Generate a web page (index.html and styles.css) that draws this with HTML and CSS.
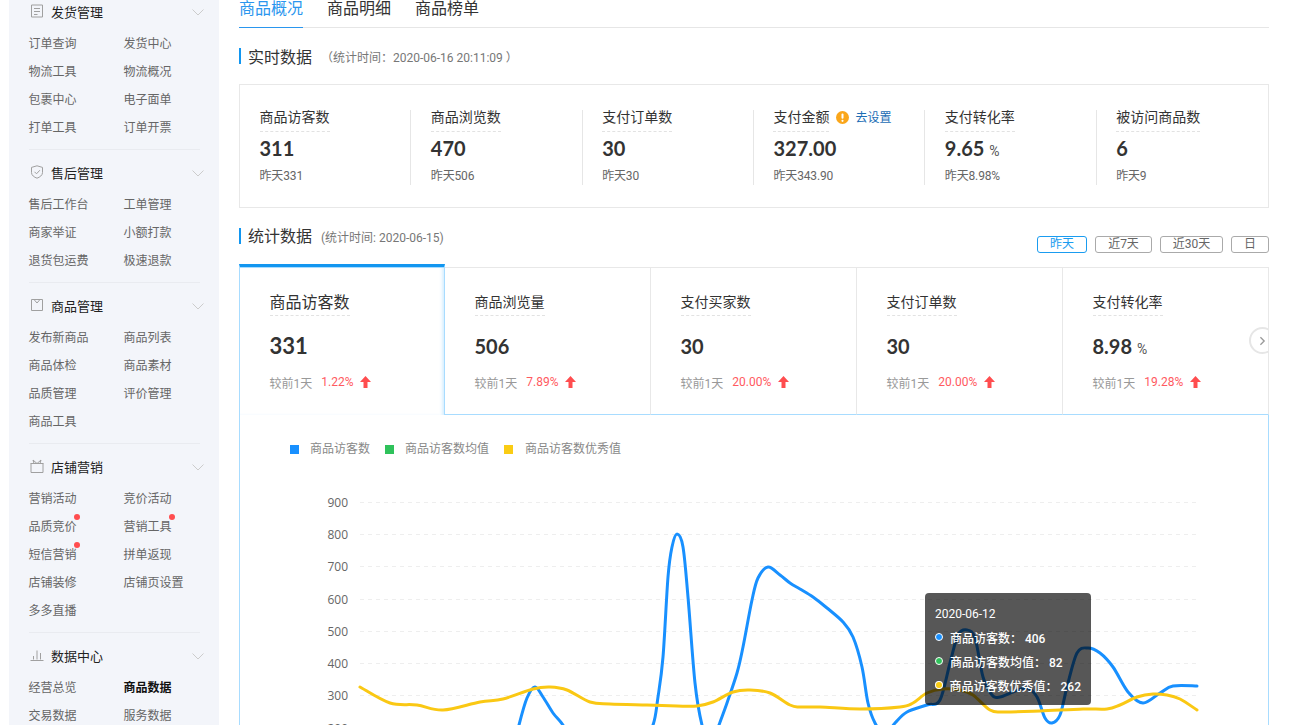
FILE: index.html
```html
<!DOCTYPE html>
<html lang="zh-CN">
<head>
<meta charset="utf-8">
<title>商品数据</title>
<link rel="stylesheet" href="styles.css">
</head>
<body>
<div class="app">
  <aside class="sidebar">
    <section class="nav-group">
      <h3 class="nav-head">
        <svg class="nav-icon" viewBox="0 0 14 14"><path d="M1.500 1h11v12h-11zM4 4.500h6M4 7.500h6M4 10.500h3.500"/></svg>
        <span class="nav-title">发货管理</span>
        <svg class="nav-caret" viewBox="0 0 12 7"><path d="M.5.5 6 6l5.500-5.500"/></svg>
      </h3>
      <ul class="nav-links">
        <li>订单查询</li><li>发货中心</li><li>物流工具</li><li>物流概况</li><li>包裹中心</li><li>电子面单</li><li>打单工具</li><li>订单开票</li>
      </ul>
    </section>
    <section class="nav-group">
      <h3 class="nav-head">
        <svg class="nav-icon" viewBox="0 0 14 14"><path d="M7 .8 1.500 2.400v5.200c0 2.600 2.600 4.600 5.500 5.600 2.900-1 5.500-3 5.500-5.600V2.400zM4.500 6.800 6.500 8.800l3.400-3.600"/></svg>
        <span class="nav-title">售后管理</span>
        <svg class="nav-caret" viewBox="0 0 12 7"><path d="M.5.5 6 6l5.500-5.500"/></svg>
      </h3>
      <ul class="nav-links">
        <li>售后工作台</li><li>工单管理</li><li>商家举证</li><li>小额打款</li><li>退货包运费</li><li>极速退款</li>
      </ul>
    </section>
    <section class="nav-group">
      <h3 class="nav-head">
        <svg class="nav-icon" viewBox="0 0 14 14"><path d="M1.500 1.500h11v11h-11zM4 1.500 7 5l3-3.500"/></svg>
        <span class="nav-title">商品管理</span>
        <svg class="nav-caret" viewBox="0 0 12 7"><path d="M.5.5 6 6l5.500-5.500"/></svg>
      </h3>
      <ul class="nav-links">
        <li>发布新商品</li><li>商品列表</li><li>商品体检</li><li>商品素材</li><li>品质管理</li><li>评价管理</li><li>商品工具</li>
      </ul>
    </section>
    <section class="nav-group">
      <h3 class="nav-head">
        <svg class="nav-icon" viewBox="0 0 14 14"><path d="M.5 4.500h13M1 4.500v9h12v-9M4 4.500 3 1l4 3.500L11 1l-1 3.500"/></svg>
        <span class="nav-title">店铺营销</span>
        <svg class="nav-caret" viewBox="0 0 12 7"><path d="M.5.5 6 6l5.500-5.500"/></svg>
      </h3>
      <ul class="nav-links">
        <li>营销活动</li><li>竞价活动</li><li class="has-dot">品质竞价</li><li class="has-dot">营销工具</li><li class="has-dot">短信营销</li><li>拼单返现</li><li>店铺装修</li><li>店铺页设置</li><li>多多直播</li>
      </ul>
    </section>
    <section class="nav-group">
      <h3 class="nav-head">
        <svg class="nav-icon" viewBox="0 0 14 14"><path d="M.5 12.500h13M3.500 11.500V8M7 11.500V2.500M10.500 11.500V5"/></svg>
        <span class="nav-title">数据中心</span>
        <svg class="nav-caret" viewBox="0 0 12 7"><path d="M.5.5 6 6l5.500-5.500"/></svg>
      </h3>
      <ul class="nav-links">
        <li>经营总览</li><li class="current">商品数据</li><li>交易数据</li><li>服务数据</li>
      </ul>
    </section>
  </aside>

  <main class="main">
    <nav class="tabs">
      <span class="tab tab-active">商品概况</span>
      <span class="tab">商品明细</span>
      <span class="tab">商品榜单</span>
    </nav>

    <div class="section-head realtime-head">
      <h2 class="section-title">实时数据</h2>
      <span class="section-note">（统计时间：2020-06-16 20:11:09 ）</span>
    </div>

    <div class="live-card">
      <div class="live-cell">
        <div class="label-line"><span class="dash-label">商品访客数</span></div>
        <div class="live-value">311</div>
        <div class="live-prev">昨天331</div>
      </div>
      <div class="live-cell">
        <div class="label-line"><span class="dash-label">商品浏览数</span></div>
        <div class="live-value">470</div>
        <div class="live-prev">昨天506</div>
      </div>
      <div class="live-cell">
        <div class="label-line"><span class="dash-label">支付订单数</span></div>
        <div class="live-value">30</div>
        <div class="live-prev">昨天30</div>
      </div>
      <div class="live-cell">
        <div class="label-line">
          <span class="dash-label">支付金额</span>
          <svg class="warn" viewBox="0 0 13 13"><circle cx="6.500" cy="6.500" r="6.500"/><rect class="warn-mark" x="5.500" y="2.500" width="2" height="5.200" rx="1"/><circle class="warn-mark" cx="6.500" cy="9.800" r="1.100"/></svg>
          <a class="set-link">去设置</a>
        </div>
        <div class="live-value">327.00</div>
        <div class="live-prev">昨天343.90</div>
      </div>
      <div class="live-cell">
        <div class="label-line"><span class="dash-label">支付转化率</span></div>
        <div class="live-value">9.65 <small class="unit">%</small></div>
        <div class="live-prev">昨天8.98%</div>
      </div>
      <div class="live-cell">
        <div class="label-line"><span class="dash-label">被访问商品数</span></div>
        <div class="live-value">6</div>
        <div class="live-prev">昨天9</div>
      </div>
    </div>

    <div class="stats-head">
      <div class="section-head">
        <h2 class="section-title stats-title">统计数据</h2>
        <span class="section-note stats-note">(统计时间: 2020-06-15)</span>
      </div>
      <div class="ranges">
        <button class="range range-on">昨天</button>
        <button class="range range-7">近7天</button>
        <button class="range range-30">近30天</button>
        <button class="range range-d">日</button>
      </div>
    </div>

    <div class="metrics">
      <div class="metric metric-on">
        <div class="metric-label"><span class="dash-label">商品访客数</span></div>
        <div class="metric-value">331</div>
        <div class="metric-cmp">较前1天<span class="up">1.22%</span><svg class="arrow" viewBox="0 0 11 12"><path d="M5.500 0 11 6H7.500v6h-4V6H0z"/></svg></div>
      </div>
      <div class="metric">
        <div class="metric-label"><span class="dash-label">商品浏览量</span></div>
        <div class="metric-value">506</div>
        <div class="metric-cmp">较前1天<span class="up">7.89%</span><svg class="arrow" viewBox="0 0 11 12"><path d="M5.500 0 11 6H7.500v6h-4V6H0z"/></svg></div>
      </div>
      <div class="metric">
        <div class="metric-label"><span class="dash-label">支付买家数</span></div>
        <div class="metric-value">30</div>
        <div class="metric-cmp">较前1天<span class="up">20.00%</span><svg class="arrow" viewBox="0 0 11 12"><path d="M5.500 0 11 6H7.500v6h-4V6H0z"/></svg></div>
      </div>
      <div class="metric">
        <div class="metric-label"><span class="dash-label">支付订单数</span></div>
        <div class="metric-value">30</div>
        <div class="metric-cmp">较前1天<span class="up">20.00%</span><svg class="arrow" viewBox="0 0 11 12"><path d="M5.500 0 11 6H7.500v6h-4V6H0z"/></svg></div>
      </div>
      <div class="metric metric-last">
        <div class="metric-label"><span class="dash-label">支付转化率</span></div>
        <div class="metric-value">8.98 <small class="unit">%</small></div>
        <div class="metric-cmp">较前1天<span class="up">19.28%</span><svg class="arrow" viewBox="0 0 11 12"><path d="M5.500 0 11 6H7.500v6h-4V6H0z"/></svg></div>
        <span class="next"><svg viewBox="0 0 8 12"><path d="M1.500 1.500 6 6l-4.500 4.500"/></svg></span>
      </div>
    </div>

    <div class="chart-box">
      <div class="legend">
        <span class="legend-item"><i class="swatch swatch-blue"></i>商品访客数</span>
        <span class="legend-item"><i class="swatch swatch-green"></i>商品访客数均值</span>
        <span class="legend-item"><i class="swatch swatch-yellow"></i>商品访客数优秀值</span>
      </div>
      <svg class="chart" id="chart" viewBox="240 480 1028 270">
        <g class="grid">
          <path d="M360 502.500H1197M360 534.500H1197M360 566.500H1197M360 599.500H1197M360 631.500H1197M360 663.500H1197M360 695.500H1197M360 728.500H1197"/>
        </g>
        <g class="axis">
          <text x="348" y="506.500">900</text>
          <text x="348" y="539">800</text>
          <text x="348" y="571">700</text>
          <text x="348" y="603.500">600</text>
          <text x="348" y="635.500">500</text>
          <text x="348" y="667.500">400</text>
          <text x="348" y="700">300</text>
          <text x="348" y="732.500">200</text>
        </g>
        <path class="line line-blue" id="line-blue"/>
        <path class="line line-yellow" id="line-yellow"/>
      </svg>
      <div class="tooltip">
        <div class="tip-date">2020-06-12</div>
        <div class="tip-row"><i class="tip-dot tip-blue"></i>商品访客数： 406</div>
        <div class="tip-row"><i class="tip-dot tip-green"></i>商品访客数均值： 82</div>
        <div class="tip-row"><i class="tip-dot tip-yellow"></i>商品访客数优秀值： 262</div>
      </div>
    </div>
  </main>
</div>
<script src="chart.js"></script>
</body>
</html>
```

FILE: styles.css
```css
* { box-sizing: border-box; }
html, body { margin: 0; padding: 0; height: 725px; overflow: hidden; background: #fff; }
body { font-family: Roboto, "Noto Sans CJK SC", sans-serif; font-size: 12px; color: #333; }
h2, h3, ul { margin: 0; padding: 0; font-weight: 400; }
ul { list-style: none; }

.app { display: flex; height: 725px; padding-left: 9px; overflow: hidden; }

.sidebar { width: 210px; flex: none; background: #f3f5fa; height: 725px; overflow: hidden; padding: 0 19px 0 20px; }
.nav-group { border-bottom: 1px solid #e9ebf0; padding: 0 0 7px; margin-bottom: 11px; }
.nav-head { display: flex; align-items: center; height: 24px; padding-bottom: 2px; font-size: 13px; color: #222; margin-right: -4px; }
.nav-icon { width: 14px; height: 14px; margin: 0 6px 0 1px; fill: none; stroke: #a0a0a0; stroke-width: 1; flex: none; }
.nav-title { flex: 1; margin-left: 1px; }
.nav-caret { width: 12px; height: 7px; fill: none; stroke: #ccc; stroke-width: 1; flex: none; margin-top: 3px; }
.nav-links { display: grid; grid-template-columns: 95px 95px; margin: 6px 0 0 -.5px; }
.nav-links li { height: 28px; line-height: 28px; color: #666; white-space: nowrap; position: relative; }
.nav-links .current { color: #111; font-weight: 700; }
.has-dot::after { content: ""; position: absolute; left: 45.5px; top: 1px; width: 6px; height: 6px; border-radius: 50%; background: #ff4d4f; }

.main { width: 1030px; flex: none; margin-left: 20px; }

.tabs { display: flex; gap: 24px; height: 28px; border-bottom: 1px solid #e6e6e6; }
.tab { height: 28px; padding-top: 1px; font-size: 16px; line-height: 16px; color: #333; }
.tab-active { color: #2a96ee; border-bottom: 1px solid #2a96ee; }

.section-head { display: flex; align-items: center; height: 16px; border-left: 2px solid #1296f0; padding-left: 7px; }
.realtime-head { margin-top: 20px; }
.section-title { padding-top: 3px; font-size: 16px; line-height: 16px; color: #333; }
.stats-title { padding-top: 1px; }
.section-note { margin-left: 9px; padding-top: 1px; color: #777; }
.stats-note { margin-left: 9px; }

.live-card { display: grid; grid-template-columns: repeat(6, 1fr); height: 124px; margin-top: 20px; padding-top: 25px; border: 1px solid #e8e8e8; }
.live-cell { height: 75px; padding-left: 19.5px; border-right: 1px solid #e6e6e6; }
.live-cell:last-child { border-right: 0; }
.label-line { display: flex; align-items: flex-start; height: 22px; font-size: 14px; line-height: 14px; color: #333; }
.dash-label { display: inline-block; border-bottom: 1px dashed #e2e2e2; padding-bottom: 7px; line-height: 14px; }
.warn { width: 13px; height: 13px; margin: 1px 0 0 6.5px; fill: #faa61a; }
.warn-mark { fill: #fff; }
.set-link { margin: 1px 0 0 6.5px; font-size: 12px; color: #1c6db5; }
.live-value { margin-top: 3.5px; font: 700 20px/24px Lato, "Noto Sans CJK SC", sans-serif; color: #333; }
.unit { font: 400 14px/14px Roboto, sans-serif; color: #555; }
.live-prev { margin-top: 8.5px; line-height: 16px; color: #666; font-size: 12px; letter-spacing: -.15px; }

.stats-head { display: flex; justify-content: space-between; align-items: flex-start; height: 26px; margin-top: 20px; }
.ranges { display: flex; gap: 8px; margin-top: 8px; }
.range { width: 50px; height: 17px; padding: 0; border: 1px solid #aaa; border-radius: 3px; background: #fff; color: #666; font: 12px/15px Roboto, "Noto Sans CJK SC", sans-serif; }
.range-7 { width: 57px; }
.range-30 { width: 63px; }
.range-d { width: 38px; }
.range-on { border-color: #1a9cf0; color: #1a9cf0; }

.metrics { display: grid; grid-template-columns: repeat(5, 1fr); margin-top: 10px; padding-top: 3px; overflow: hidden; }
.metric { position: relative; height: 148px; padding-left: 29.5px; border-top: 1px solid #e8e8e8; border-right: 1px solid #e8e8e8; border-bottom: 1px solid #a8dcff; overflow: hidden; }
.metric-on { margin-top: -3px; height: 151px; border-top: 3px solid #1296f0; border-left: 1px solid #a8dcff; border-right: 1px solid #a8dcff; border-bottom: 0; box-shadow: inset 0 1px #a8dcff, inset -3px 0 3px -1px rgba(168,220,255,.45); }
.metric-label { height: 21px; margin-top: 26px; font-size: 14px; line-height: 14px; color: #333; }
.metric-on .metric-label { height: 20px; margin-top: 28px; font-size: 16px; }
.metric-label .dash-label { padding-bottom: 5px; line-height: 16px; }
.metric-on .dash-label { padding-bottom: 4px; }
.metric-value { margin-top: 19px; font: 700 20px/24px Lato, "Noto Sans CJK SC", sans-serif; color: #333; }
.metric-on .metric-value { font-size: 22px; }
.metric-cmp { display: flex; align-items: center; margin-top: 16px; height: 16px; color: #999; }
.up { margin-left: 9px; color: #ff5a5f; }
.arrow { width: 11px; height: 12px; margin-left: 7px; fill: #ff4d4f; }
.next { position: absolute; right: -8px; top: 59px; display: flex; align-items: center; width: 27px; height: 27px; padding-left: 8px; border: 2px solid #e6e6e6; border-radius: 50%; background: #fff; }
.next svg { width: 7px; height: 10px; fill: none; stroke: #999; stroke-width: 1.600; }

.chart-box { position: relative; height: 400px; border-left: 1px solid #a8dcff; border-right: 1px solid #a8dcff; }
.legend { display: flex; padding: 26px 0 0 50px; height: 42px; color: #888; line-height: 16px; }
.legend-item { display: flex; align-items: center; margin-right: 15px; }
.swatch { width: 9px; height: 9px; margin-right: 11px; }
.swatch-blue { background: #1890ff; }
.swatch-green { background: #2fc25b; }
.swatch-yellow { background: #facc14; margin-right: 12px; }
.chart { display: block; width: 1028px; height: 270px; margin-top: 23px; }
.grid path { fill: none; stroke: #eee; stroke-width: 1; stroke-dasharray: 4 4; }
.axis text { font: 12px "Open Sans", sans-serif; fill: #666; text-anchor: end; }
.line { fill: none; stroke-width: 3; stroke-linejoin: round; stroke-linecap: round; }
.line-blue { stroke: #1890ff; }
.line-yellow { stroke: #fac814; }

.tooltip { position: absolute; left: 685px; top: 178px; width: 166px; height: 112px; padding: 13px 10px; border-radius: 4px; background: rgba(0,0,0,.66); color: #fff; }
.tip-date { line-height: 16px; }
.tip-row { display: flex; align-items: center; height: 24px; font-weight: 500; white-space: pre; }
.tip-date + .tip-row { margin-top: 3px; }
.tip-dot { width: 8px; height: 8px; margin-right: 7px; border: 1px solid #fff; border-radius: 50%; }
.tip-blue { background: #1890ff; }
.tip-green { background: #2fc25b; }
.tip-yellow { background: #facc14; }
```

FILE: chart.js
```js
(function () {
  var blue = [
    [515,745],[519,725],[527,698],[535,687],[543,697],[553,713],[563,725],[575,745],[640,745],[653,725],[658,697],[663,657],[668,577],[672,547],[677,534],[683,547],[688,597],[695,683],[702,725],[710,745],[716,735],[719,725],[727,703],[737,673],[743,647],[752,600],[758,578],[768,567],[780,575],[790,583],[800,589],[813,597],[827,608],[843,622],[853,637],[862,667],[868,703],[875,723],[885,735],[895,723],[907,712],[927,705],[940,700],[950,663],[958,635],[967,630],[975,638],[983,677],[992,695],[1000,697],[1013,692],[1027,688],[1037,697],[1045,718],[1052,723],[1060,715],[1067,687],[1077,653],[1088,648],[1100,653],[1113,667],[1128,692],[1143,703],[1160,693],[1173,686],[1197,686]
  ];
  var yellow = [
    [360,687],[390,703],[417,705],[443,710],[480,702],[503,699],[533,689],[550,687],[567,690],[590,702],[610,704],[647,705],[677,706],[697,706],[713,702],[733,692],[750,690],[770,693],[790,705],[800,707],[820,707],[860,709],[900,707],[913,703],[927,693],[943,689],[960,690],[973,695],[990,710],[1003,712],[1040,711],[1083,709],[1107,709],[1120,705],[1137,697],[1153,694],[1167,695],[1180,699],[1197,710]
  ];
  function smooth(p) {
    var d = "M" + p[0][0] + " " + p[0][1];
    for (var i = 0; i < p.length - 1; i++) {
      var a = p[Math.max(i - 1, 0)], b = p[i], c = p[i + 1], e = p[Math.min(i + 2, p.length - 1)];
      d += "C" + (b[0] + (c[0] - a[0]) / 6).toFixed(1) + " " + (b[1] + (c[1] - a[1]) / 6).toFixed(1) + " " +
        (c[0] - (e[0] - b[0]) / 6).toFixed(1) + " " + (c[1] - (e[1] - b[1]) / 6).toFixed(1) + " " + c[0] + " " + c[1];
    }
    return d;
  }
  document.getElementById("line-blue").setAttribute("d", smooth(blue));
  document.getElementById("line-yellow").setAttribute("d", smooth(yellow));
})();
```
